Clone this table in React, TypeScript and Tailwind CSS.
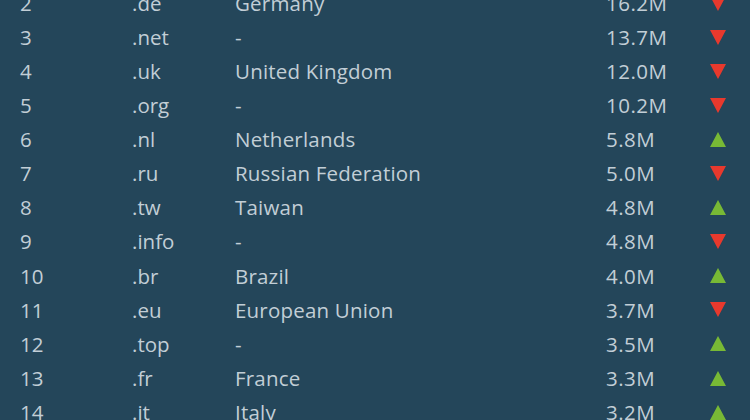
const rows = [
  { rank: 2, tld: '.de', country: 'Germany', count: '16.2M', up: false },
  { rank: 3, tld: '.net', country: '-', count: '13.7M', up: false },
  { rank: 4, tld: '.uk', country: 'United Kingdom', count: '12.0M', up: false },
  { rank: 5, tld: '.org', country: '-', count: '10.2M', up: false },
  { rank: 6, tld: '.nl', country: 'Netherlands', count: '5.8M', up: true },
  { rank: 7, tld: '.ru', country: 'Russian Federation', count: '5.0M', up: false },
  { rank: 8, tld: '.tw', country: 'Taiwan', count: '4.8M', up: true },
  { rank: 9, tld: '.info', country: '-', count: '4.8M', up: false },
  { rank: 10, tld: '.br', country: 'Brazil', count: '4.0M', up: true },
  { rank: 11, tld: '.eu', country: 'European Union', count: '3.7M', up: false },
  { rank: 12, tld: '.top', country: '-', count: '3.5M', up: true },
  { rank: 13, tld: '.fr', country: 'France', count: '3.3M', up: true },
  { rank: 14, tld: '.it', country: 'Italy', count: '3.2M', up: true },
];

function Trend({ up }: { up: boolean }) {
  return (
    <svg width="16" height="15" viewBox="0 0 16 15">
      {up ? (
        <polygon points="8,0 16,15 0,15" fill="#78b935" />
      ) : (
        <polygon points="0,0 16,0 8,15" fill="#e8392d" />
      )}
    </svg>
  );
}

export default function App() {
  return (
    <div className="w-[750px] h-[420px] overflow-hidden bg-[#24465a] text-[#c2ced6] font-['Open_Sans',sans-serif] text-[20.5px]">
      <div className="-mt-[14px]">
        {rows.map((r) => (
          <div key={r.rank} className="flex items-center h-[34.1px] leading-none">
            <div className="w-[132px] pl-[20px]">{r.rank}</div>
            <div className="w-[103px]">{r.tld}</div>
            <div className="w-[371px] tracking-[0.2px]">{r.country}</div>
            <div className="w-[104px] tracking-[0.5px]">{r.count}</div>
            <Trend up={r.up} />
          </div>
        ))}
      </div>
    </div>
  );
}
